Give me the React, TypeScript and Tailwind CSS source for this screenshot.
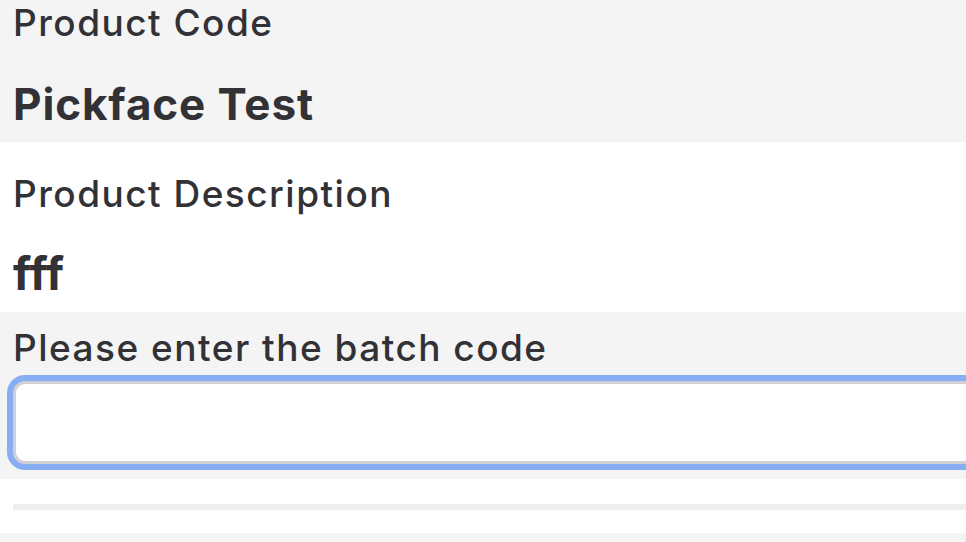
export default function App() {
  return (
    <div
      className="h-[542px] w-full overflow-hidden bg-white text-[#313136]"
      style={{ fontFamily: "Inter, 'Noto Sans', sans-serif" }}
    >
      <div className="w-[1100px]">
        {/* product code */}
        <div className="h-[142px] bg-[#f4f4f4] px-[13px] pt-[1px]">
          <div className="text-[37px] font-medium leading-[44px] tracking-[0.04em]">Product Code</div>
          <div className="mt-[31px] text-[44px] font-bold leading-[56px] tracking-[0.02em]">Pickface Test</div>
        </div>

        {/* description */}
        <div className="h-[170px] bg-white px-[13px] pt-[30px]">
          <div className="text-[37px] font-medium leading-[44px] tracking-[0.04em]">Product Description</div>
          <div className="mt-[29px] text-[46px] font-bold leading-[56px]">fff</div>
        </div>

        {/* batch code */}
        <div className="h-[167px] bg-[#f4f4f4] px-[13px] pt-[14px]">
          <label className="block text-[37px] font-medium leading-[44px] tracking-[0.04em]">Please enter the batch code</label>
          <input
            type="text"
            className="mt-[11px] block h-[83px] w-full rounded-xl border-[3px] border-[#d0d0d5] bg-white px-4 text-[36px] outline-none ring-[6px] ring-[#87adf5]"
          />
        </div>

        <div className="h-[54px] bg-white px-[13px] pt-[25px]">
          <div className="h-[6px] bg-[#efefef]" />
        </div>
        <div className="h-[40px] bg-[#f4f4f4]" />
      </div>
    </div>
  );
}
